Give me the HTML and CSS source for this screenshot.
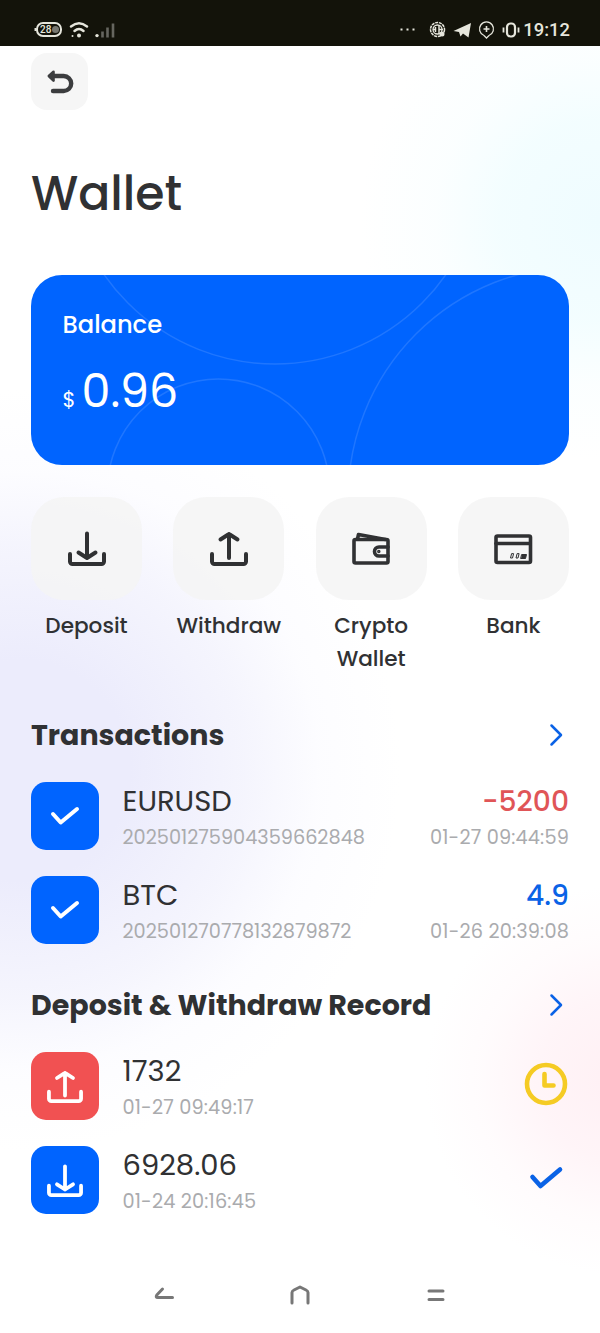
FILE: index.html
```html
<!DOCTYPE html>
<html lang="en">
<head>
<meta charset="utf-8">
<title>Wallet</title>
<link rel="stylesheet" href="styles.css">
</head>
<body>
<svg class="defs" width="0" height="0">
  <symbol id="down" viewBox="0 0 40 36"><path d="M3 23v7.500a2.500 2.500 0 0 0 2.500 2.500h29a2.500 2.500 0 0 0 2.500-2.500V23M20 2.500v24.500M11.500 21.500l8.500 5.500 8.500-5.500"/></symbol>
  <symbol id="up" viewBox="0 0 40 36"><path d="M3 23v7.500a2.500 2.500 0 0 0 2.500 2.500h29a2.500 2.500 0 0 0 2.500-2.500V23M20 27V3M11.500 8.500L20 3l8.500 5.500"/></symbol>
  <symbol id="tick" viewBox="0 0 30 22"><path d="M3 9l7.700 8.500L27 4"/></symbol>
  <symbol id="next" viewBox="0 0 16 24"><path d="M3.500 2.500l9.500 9.500-9.500 9.500"/></symbol>
</svg>
<header class="status">
  <svg class="status-left" width="86" height="20" viewBox="0 0 86 20" fill="none">
    <rect x="3" y="3" width="24" height="13" rx="6" stroke="#e6e6dc" stroke-width="2"/>
    <path d="M1.500 8v3" stroke="#e6e6dc" stroke-width="2"/>
    <circle cx="21.500" cy="9.500" r="3.500" fill="#777770"/>
    <text class="battery" x="6" y="13.300">28</text>
    <path d="M37 6.500q8-6.500 16 0M40.500 11q4.500-4 9 0" stroke="#e6e6dc" stroke-width="2.400" stroke-linecap="round"/>
    <circle cx="45" cy="15.600" r="2" fill="#e6e6dc"/><circle cx="38.500" cy="16" r="1" fill="#e6e6dc"/>
    <circle cx="63" cy="15.600" r="1.700" fill="#e6e6dc"/>
    <path d="M68.500 17.500v-6M73.500 17.500v-10M79 17.500v-14" stroke="#66665f" stroke-width="2.600"/>
  </svg>
  <div class="status-right">
    <svg width="125" height="22" viewBox="0 0 125 22" fill="none" stroke="#e6e6dc">
      <path d="M3.500 10.500h2M9.500 10.500h2M15.500 10.500h2" stroke-width="2"/>
      <circle cx="40.500" cy="10.500" r="7" stroke-width="1.500" stroke-dasharray="3 .8"/>
      <circle cx="40.500" cy="10.500" r="4.500" stroke-width="1.300"/>
      <path d="M38.500 8v5M42 6v9M36 10.500h3M42 10.500h4" stroke-width="1.500"/><circle cx="45" cy="15" r="2.500" fill="#e6e6dc" stroke="none"/>
      <path d="M56.500 12L74 4l-2.500 14.500-5.500-4-2.500 3-1.500-4.500z" fill="#e6e6dc" stroke="none"/>
      <path d="M87 16.500a7 7 0 1 1 5 0L89.500 19z" stroke-width="1.300"/>
      <path d="M89.500 7v6M86.500 10h6" stroke-width="1.600"/>
      <rect x="110" y="4.500" width="8" height="13" rx="3.500" stroke-width="2.200"/>
      <path d="M106.500 8.500v5M121.500 8.500v5" stroke-width="1.800"/>
    </svg>
    <span class="clock">19:12</span>
  </div>
</header>
<main class="page">
  <button class="back" aria-label="Back">
    <svg width="28" height="26" viewBox="0 0 28 26" fill="none" stroke="#3c3d3f" stroke-width="4.400" stroke-linecap="round" stroke-linejoin="round"><path d="M6 7h11.700a7.500 7.500 0 0 1 0 15H7"/><path d="M7.500 2.800L2.800 7l4.700 4.700z" stroke-width="2.600" fill="#3c3d3f"/></svg>
  </button>
  <h1 class="title">Wallet</h1>
  <section class="card">
    <svg class="rings" width="539" height="190" viewBox="31 275 539 190" fill="none" stroke="#fff" stroke-opacity=".12" stroke-width="1.500"><circle cx="275" cy="156" r="208"/><circle cx="218.500" cy="490" r="111"/><circle cx="579.500" cy="497.600" r="231.300"/></svg>
    <div class="card-label">Balance</div>
    <div class="amount"><span class="currency">$</span><span class="value">0.96</span></div>
  </section>
  <nav class="actions">
    <a class="action"><span class="tile"><svg class="line" width="40" height="36"><use href="#down"/></svg></span>Deposit</a>
    <a class="action"><span class="tile"><svg class="line" width="40" height="36"><use href="#up"/></svg></span>Withdraw</a>
    <a class="action"><span class="tile"><svg class="line thin" width="40" height="36" viewBox="0 0 40 36"><rect x="3" y="8.500" width="34" height="23.500" rx="1.500"/><path d="M6.500 8l1-4.500L34.500 8.500"/><path d="M37 16H28a4.500 4.500 0 0 0 0 9h9"/><circle cx="27.800" cy="20.500" r="1" stroke-width="1.500"/></svg></span><span>Crypto</span><span>Wallet</span></a>
    <a class="action"><span class="tile"><svg class="line thin" width="40" height="36" viewBox="0 0 40 36"><rect x="3" y="5" width="34.500" height="26.500" rx="1.500"/><path d="M3 12.500h34"/><path d="M18.500 23l-1 4h2l1-4zM24 23l-1 4h2l1-4z" stroke-width="1"/><path d="M29 23.500h4.500l-1 4H28z" stroke-width="1" fill="#303133"/></svg></span>Bank</a>
  </nav>
  <section class="group">
    <h2 class="heading">Transactions<svg class="next" width="16" height="24"><use href="#next"/></svg></h2>
    <div class="row"><i class="badge"><svg width="30" height="22"><use href="#tick"/></svg></i>
      <div class="info"><span class="name">EURUSD</span><span class="sub">202501275904359662848</span></div>
      <div class="info end"><span class="name num loss">-5200</span><span class="sub date">01-27 09:44:59</span></div></div>
    <div class="row"><i class="badge"><svg width="30" height="22"><use href="#tick"/></svg></i>
      <div class="info"><span class="name">BTC</span><span class="sub">202501270778132879872</span></div>
      <div class="info end"><span class="name num gain">4.9</span><span class="sub date">01-26 20:39:08</span></div></div>
  </section>
  <section class="group">
    <h2 class="heading">Deposit &amp; Withdraw Record<svg class="next" width="16" height="24"><use href="#next"/></svg></h2>
    <div class="row"><i class="badge out"><svg class="tray" width="38" height="34"><use href="#up"/></svg></i>
      <div class="info"><span class="name">1732</span><span class="sub date">01-27 09:49:17</span></div>
      <svg class="pending" width="44" height="44" viewBox="0 0 44 44"><circle cx="22" cy="22" r="19"/><path d="M20.500 12v11.500h9"/></svg></div>
    <div class="row"><i class="badge"><svg class="tray" width="38" height="34"><use href="#down"/></svg></i>
      <div class="info"><span class="name">6928.06</span><span class="sub date">01-24 20:16:45</span></div>
      <svg class="done" width="36" height="26" viewBox="0 0 36 26"><path d="M4.500 12l8 9L32 4.500"/></svg></div>
  </section>
</main>
<footer class="navbar">
  <svg width="22" height="22" viewBox="0 0 22 22"><path d="M9.500 5L3.800 11q-1.500 2.500 1 2.500h14.700"/></svg>
  <svg width="22" height="22" viewBox="0 0 22 22"><path d="M3 19V8.500Q3 7 5 6l6-3 6 3q2 1 2 2.500V19"/></svg>
  <svg width="22" height="22" viewBox="0 0 22 22"><path d="M4 7h14M4 15.500h14"/></svg>
</footer>
</body>
</html>
```
FILE: styles.css
```css
* { box-sizing: border-box; }
body {
  margin: 0;
  width: 600px;
  height: 1333px;
  overflow: hidden;
  display: flex;
  flex-direction: column;
  font-family: Poppins, Inter, "Open Sans", sans-serif;
  color: #303133;
  background:
    radial-gradient(circle at 600px 220px, #effcff 0, rgba(240,253,255,.8) 100px, rgba(248,254,255,.55) 165px, rgba(255,255,255,0) 240px),
    radial-gradient(circle at 20px 770px, #ececfc 0, #ececfc 110px, rgba(243,243,253,.85) 225px, rgba(250,250,255,.5) 300px, rgba(255,255,255,0) 380px),
    radial-gradient(circle at 620px 1080px, #fff0f4 0, rgba(255,242,246,.8) 80px, rgba(255,249,251,.6) 140px, rgba(255,255,255,0) 195px),
    #fff;
}
.defs { position: absolute; }
.status { flex: none; height: 46px; padding: 14px 30px 0 34px; background: #13130a; display: flex; justify-content: space-between; align-items: center; }
.battery { font: 500 10px Roboto, sans-serif; fill: #e6e6dc; }
.status-right { display: flex; align-items: center; gap: 1px; }
.clock { font: 500 18.400px/22px Roboto, sans-serif; color: #e6e6dc; }
.page { flex: none; padding: 7px 31px 0; }
.back { display: flex; align-items: center; justify-content: center; width: 57px; height: 57px; padding: 0; border: 0; border-radius: 16px; background: #f6f6f6; }
.title { margin: 54px 0 0; font-size: 47.300px; font-weight: 500; line-height: 60px; }
.card { position: relative; margin-top: 51px; height: 190px; padding: 35px 31.500px; border-radius: 31px; background: #0064ff; color: #fff; overflow: hidden; }
.rings { position: absolute; left: 0; top: 0; }
.card-label { position: relative; font-size: 24.200px; font-weight: 500; line-height: 30px; }
.amount { position: relative; margin-top: 21px; line-height: 61px; font-size: 46px; display: flex; align-items: baseline; gap: 6px; }
.currency { font-size: 21px; }
.actions { display: grid; grid-template-columns: repeat(4, 111px); justify-content: space-between; margin-top: 32px; height: 195px; }
.action { display: flex; flex-direction: column; align-items: center; font-size: 21.600px; font-weight: 500; line-height: 33px; }
.tile { width: 111px; height: 103px; margin-bottom: 9px; border-radius: 33px; background: rgba(244,244,244,.85); display: flex; align-items: center; justify-content: center; }
.line { fill: none; stroke: #303133; stroke-width: 4; stroke-linecap: round; stroke-linejoin: round; }
.thin { stroke-width: 3.600; }
.heading { margin: 0; height: 48px; line-height: 47px; font-size: 28.500px; font-weight: 700; display: flex; justify-content: space-between; align-items: flex-start; }
.next { margin: 11px 5px 0 0; fill: none; stroke: #0a62e6; stroke-width: 2.500; stroke-linecap: round; stroke-linejoin: round; }
.group { padding-top: 20px; height: 270.400px; }
.row { display: flex; align-items: center; height: 68px; margin-bottom: 26px; }
.heading + .row { margin-top: 22px; }
.badge { width: 68px; height: 68px; margin-right: 23.500px; border-radius: 15px; background: #0064ff; display: flex; align-items: center; justify-content: center; fill: none; stroke: #fff; stroke-width: 4; stroke-linecap: round; stroke-linejoin: round; }
.badge.out { background: #f15152; }
.tray { margin-top: 2px; }
.info { flex: 1; height: 68px; display: flex; flex-direction: column; align-items: flex-start; }
.info.end { align-items: flex-end; }
.name { flex: none; font-size: 29px; line-height: 39px; }
.sub { flex: none; font-size: 19.300px; line-height: 34px; color: #aaabae; }
.date { letter-spacing: .17px; }
.num { font-size: 28.200px; font-weight: 500; }
.loss { color: #e05557; }
.gain { color: #0a62e6; }
.pending { margin-right: 1px; margin-top: -4px; fill: none; stroke: #f5cb24; stroke-width: 4.600; stroke-linecap: round; stroke-linejoin: round; }
.done { margin-right: 5px; margin-top: -4px; fill: none; stroke: #0a62e6; stroke-width: 4.600; stroke-linecap: round; stroke-linejoin: round; }
.navbar { flex: none; margin-top: 51px; height: 44px; display: flex; justify-content: center; gap: 114px; fill: none; stroke: #777; stroke-width: 3; stroke-linecap: round; stroke-linejoin: round; }
```
